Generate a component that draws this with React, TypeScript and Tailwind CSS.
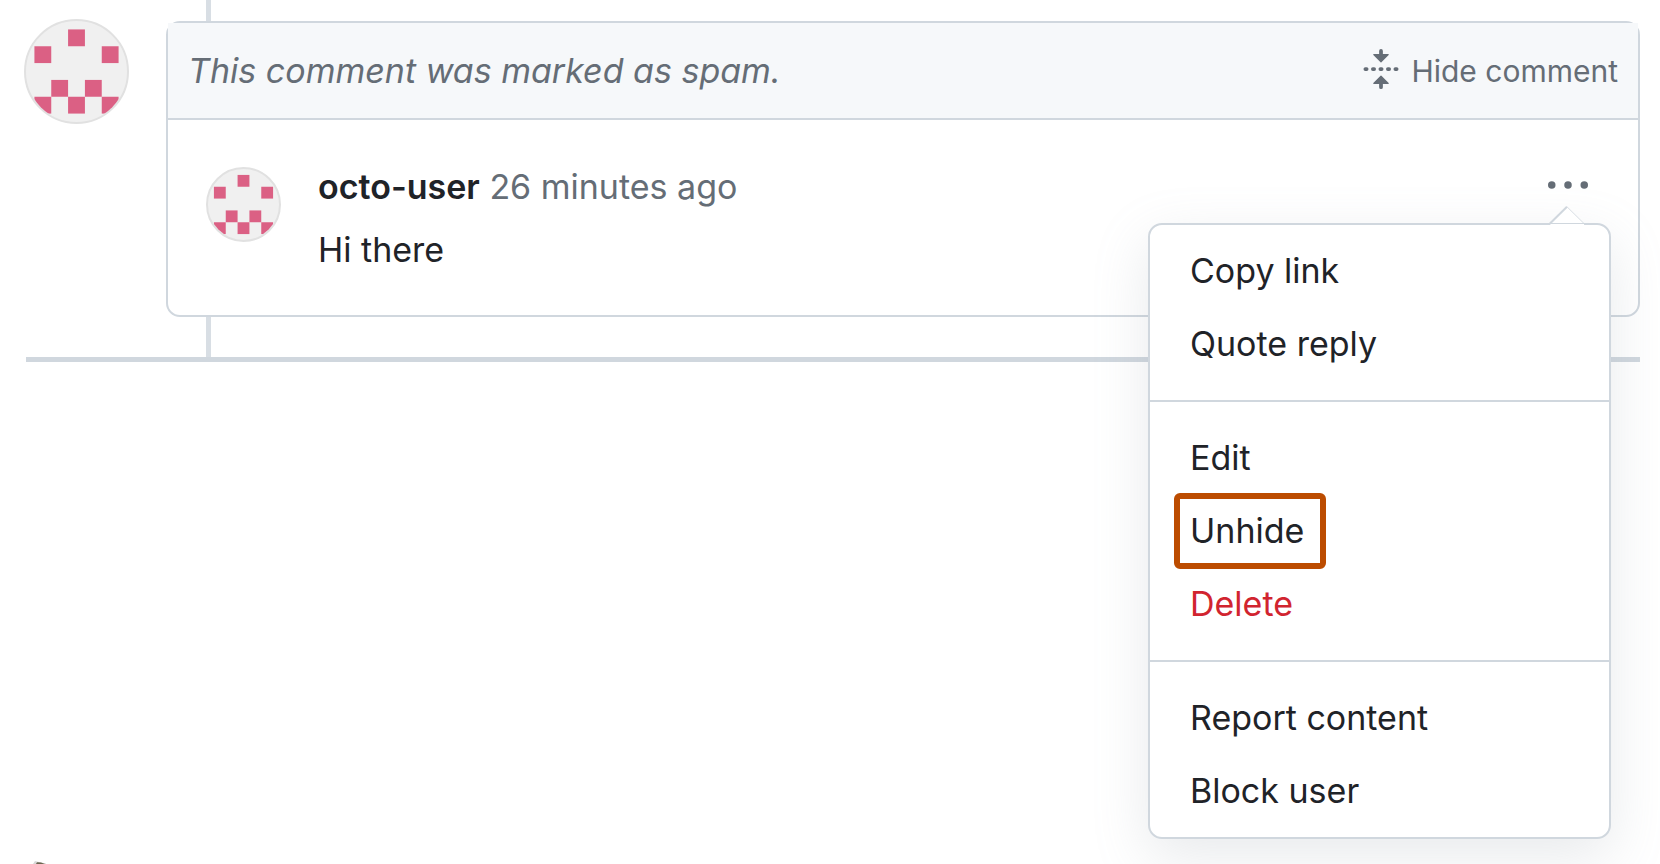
import { clsx } from "clsx";

interface MenuItem {
  label: string;
  danger?: boolean;
  highlighted?: boolean;
}

const menuGroups: MenuItem[][] = [
  [{ label: "Copy link" }, { label: "Quote reply" }],
  [
    { label: "Edit" },
    { label: "Unhide", highlighted: true },
    { label: "Delete", danger: true },
  ],
  [{ label: "Report content" }, { label: "Block user" }],
];

// filled cells of the 5x5 identicon, as [column, row]
const identiconCells = [
  [2, 0],
  [0, 1],
  [4, 1],
  [1, 3],
  [3, 3],
  [0, 4],
  [2, 4],
  [4, 4],
];

function Identicon({ className }: { className?: string }) {
  return (
    <span
      className={clsx(
        "block shrink-0 overflow-hidden rounded-full border-2 border-[#e1e1e1] bg-[#f0f0f0]",
        className
      )}
    >
      <svg viewBox="0 0 12 12" className="block size-full" role="img" aria-label="@octo-user">
        {identiconCells.map(([col, row]) => (
          <rect key={`${col}-${row}`} x={1 + col * 2} y={1 + row * 2} width="2" height="2" fill="#db6084" />
        ))}
      </svg>
    </span>
  );
}

function FoldIcon() {
  return (
    <svg viewBox="0 0 16 16" className="mb-1 size-10 shrink-0" fill="currentColor" aria-hidden="true">
      <path d="M10.896 2H8.75V.75a.75.75 0 0 0-1.5 0V2H5.104a.25.25 0 0 0-.177.427l2.896 2.896a.25.25 0 0 0 .354 0l2.896-2.896A.25.25 0 0 0 10.896 2ZM8.75 15.25a.75.75 0 0 1-1.5 0V14H5.104a.25.25 0 0 1-.177-.427l2.896-2.896a.25.25 0 0 1 .354 0l2.896 2.896a.25.25 0 0 1-.177.427H8.75v1.25Zm-6.5-6.5a.75.75 0 0 0 0-1.5h-.5a.75.75 0 0 0 0 1.5h.5ZM6 8a.75.75 0 0 1-.75.75h-.5a.75.75 0 0 1 0-1.5h.5A.75.75 0 0 1 6 8Zm2.25.75a.75.75 0 0 0 0-1.5h-.5a.75.75 0 0 0 0 1.5h.5ZM12 8a.75.75 0 0 1-.75.75h-.5a.75.75 0 0 1 0-1.5h.5A.75.75 0 0 1 12 8Zm2.25.75a.75.75 0 0 0 0-1.5h-.5a.75.75 0 0 0 0 1.5h.5Z" />
    </svg>
  );
}

function KebabIcon() {
  return (
    <svg viewBox="0 0 16 16" className="size-10" fill="currentColor" aria-hidden="true">
      <circle cx="1.5" cy="8" r="1.5" />
      <circle cx="8" cy="8" r="1.5" />
      <circle cx="14.5" cy="8" r="1.5" />
    </svg>
  );
}

function CommentMenu() {
  return (
    <div className="absolute top-[58px] -right-[23px] w-[463px] rounded-[14px] border-2 border-[#d0d7de] bg-white shadow-[0_18px_56px_rgba(140,149,159,0.2)]">
      {/* Caret */}
      <svg
        viewBox="0 0 36 19"
        className="absolute -top-[19px] right-6 h-[19px] w-9"
        fill="none"
        aria-hidden="true"
      >
        <path d="M1 18 18 1 35 18V19H1Z" fill="#fff" />
        <path d="M0.5 18 18 0.8" stroke="#d0d7de" strokeWidth="2" />
        <path d="M18 0.8 35.5 18" stroke="#d8dee4" strokeWidth="1" />
        <path d="M0 17.5H36" stroke="#d0d7de" strokeWidth="1" />
      </svg>

      {menuGroups.map((group, i) => (
        <ul
          key={group[0].label}
          className={clsx(
            "flex flex-col gap-px",
            i === 0 ? "pt-[10px]" : "border-t-2 border-[#d0d7de] pt-5",
            i === menuGroups.length - 1 ? "pb-[10px]" : "pb-5"
          )}
        >
          {group.map((item) => (
            <li key={item.label} className="flex h-[72px] items-center px-6">
              <button
                type="button"
                className={clsx(
                  "rounded-md border-6 py-3 pr-4 pl-[10px] text-[34px] leading-10",
                  item.highlighted ? "border-[#bc4c00]" : "border-transparent",
                  item.danger && "text-[#d1242f]"
                )}
              >
                {item.label}
              </button>
            </li>
          ))}
        </ul>
      ))}
    </div>
  );
}

export default function App() {
  return (
    <main className="flex min-h-screen flex-col overflow-hidden bg-white pr-5 pl-6 font-['Inter','Liberation_Sans',sans-serif] text-[34px] leading-10 text-[#1f2328]">
      <div className="flex items-start gap-[37px]">
        <Identicon className="mt-[19px] size-[105px]" />

        <div className="min-w-0 flex-1">
          {/* Timeline */}
          <div className="ml-10 h-[21px] w-[5px] bg-[#d8dee4]" />

          <article className="rounded-[14px] border-2 border-[#d0d7de]">
            <header className="flex h-[97px] items-center justify-between border-b-2 border-[#d0d7de] bg-[#f6f8fa] px-5 text-[#656d76]">
              <em>This comment was marked as spam.</em>
              <button type="button" className="flex items-center gap-[10px] text-[30px]">
                <FoldIcon />
                Hide comment
              </button>
            </header>

            <div className="flex h-[195px] items-start pt-[45px] pr-[50px] pl-[38px]">
              <Identicon className="mt-[2px] size-[75px]" />
              <div className="mt-[2px] ml-[37px] flex flex-1 flex-col gap-[23px]">
                <p>
                  <a href="#octo-user" className="font-semibold">
                    octo-user
                  </a>{" "}
                  <a href="#comment" className="text-[#656d76]">
                    26 minutes ago
                  </a>
                </p>
                <p>Hi there</p>
              </div>
              <div className="relative">
                <button type="button" aria-label="Show options" className="block text-[#656d76]">
                  <KebabIcon />
                </button>
                <CommentMenu />
              </div>
            </div>
          </article>

          <div className="ml-10 h-10 w-[5px] bg-[#d8dee4]" />
        </div>
      </div>

      <hr className="ml-[2px] h-[5px] border-0 bg-[#d0d7de]" />

      {/* Top edge of the next avatar */}
      <svg viewBox="0 0 14 3" className="mt-auto ml-2 h-[3px] w-[14px]" aria-hidden="true">
        <path d="M1 3 3 0 7 1 14 2.5V3Z" fill="#d8d8d8" />
        <path d="M4 3 5 1.2 9 1.6 13 3Z" fill="#6b6650" />
      </svg>
    </main>
  );
}
